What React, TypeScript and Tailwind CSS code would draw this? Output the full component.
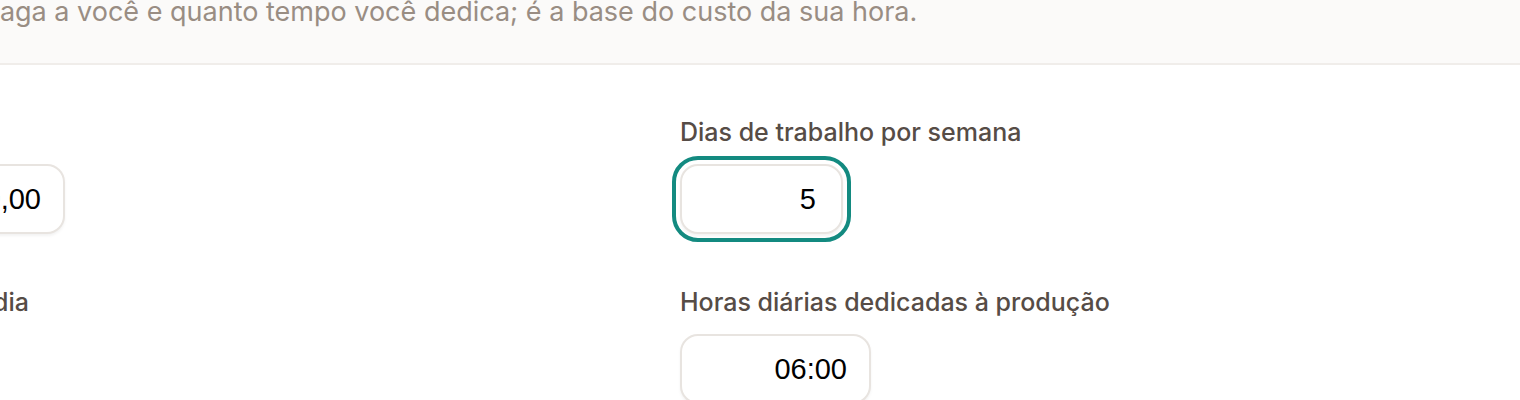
import { FC } from "react";

type FieldProps = {
  label: string;
  value: string;
  width: string;
  focused?: boolean;
};

const Field: FC<FieldProps> = ({ label, value, width, focused }) => (
  <div className="flex flex-col">
    <label className="mb-[16px] whitespace-nowrap text-[25px] leading-[32px] font-medium text-[#564c46]">
      {label}
    </label>
    <input
      readOnly
      value={value}
      className={[
        "h-[70px] rounded-[18px] border-2 border-[#e8e4e0] bg-white text-right text-[29px] text-black shadow-[0_2px_3px_rgba(0,0,0,0.05)] font-['Liberation_Sans',Arial,sans-serif]",
        width,
        focused
          ? "pr-[25px] outline-[4px] outline-solid outline-offset-[4px] outline-[#138a80]"
          : "pr-[22px] outline-none",
      ].join(" ")}
    />
  </div>
);

export default function App() {
  return (
    <div className="h-[400px] w-[1520px] overflow-hidden bg-white font-['Inter',sans-serif]">
      <div className="flex h-[65px] items-start border-b-2 border-[#f0edea] bg-[#fbfaf9]">
        <p className="ml-[-385px] mt-[-4px] whitespace-nowrap text-[27px] leading-[32px] text-[#998d83]">
          Informe quanto seu trabalho paga a você e quanto tempo você dedica; é a base do custo da sua hora.
        </p>
      </div>

      <div className="ml-[-279px] grid grid-cols-[919px_auto] gap-x-[40px] gap-y-[52px] pt-[51px]">
        <Field label="Pró-labore mensal" value="5.000,00" width="w-[344px]" />
        <Field label="Dias de trabalho por semana" value="5" width="w-[163px]" focused />
        <Field label="Horas trabalhadas por dia" value="08:00" width="w-[190px]" />
        <Field label="Horas diárias dedicadas à produção" value="06:00" width="w-[191px]" />
      </div>
    </div>
  );
}
